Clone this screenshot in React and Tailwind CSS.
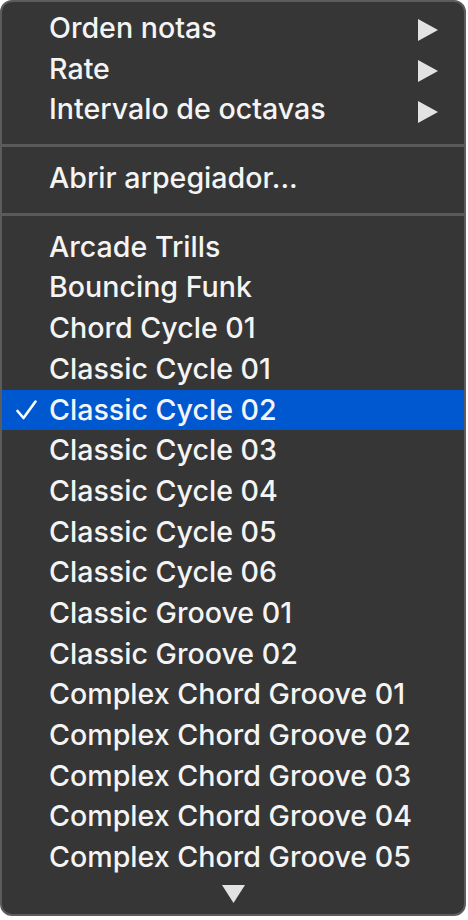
import React from "react";

const font = { fontFamily: 'Inter, "Liberation Sans", Arial, sans-serif' };

function RightTri() {
  return (
    <svg width="20" height="22" viewBox="0 0 20 22" className="block">
      <path d="M0 0 L20 11 L0 22 Z" fill="#e3e3e3" />
    </svg>
  );
}

function Row({ label, arrow, checked }) {
  return (
    <div
      className={`h-[40.7px] flex items-center relative ${checked ? "bg-[#0058d0]" : ""}`}
    >
      <div className="w-[47px] shrink-0 flex justify-center pl-[2px]">
        {checked && (
          <svg width="21" height="20" viewBox="0 0 21 20" className="block">
            <path
              d="M1.5 11 L7.5 18 L19.5 1.5"
              fill="none"
              stroke="#ffffff"
              strokeWidth="2.6"
              strokeLinecap="round"
              strokeLinejoin="round"
            />
          </svg>
        )}
      </div>
      <div className="flex-1 text-[28.6px] font-medium leading-none text-[#f4f4f4] whitespace-nowrap">
        {label}
      </div>
      {arrow && (
        <div className="pr-[26px] mt-[4px]">
          <RightTri />
        </div>
      )}
    </div>
  );
}

function Sep() {
  return (
    <div className="h-[28px] flex items-center">
      <div className="w-full h-[3px] bg-[#5a5a5a] mt-[3px]" />
    </div>
  );
}

export default function App() {
  const list = [
    "Arcade Trills",
    "Bouncing Funk",
    "Chord Cycle 01",
    "Classic Cycle 01",
    "Classic Cycle 02",
    "Classic Cycle 03",
    "Classic Cycle 04",
    "Classic Cycle 05",
    "Classic Cycle 06",
    "Classic Groove 01",
    "Classic Groove 02",
    "Complex Chord Groove 01",
    "Complex Chord Groove 02",
    "Complex Chord Groove 03",
    "Complex Chord Groove 04",
    "Complex Chord Groove 05",
  ];
  return (
    <div className="w-[468px] h-[920px] bg-white" style={font}>
      <div className="w-[466px] h-[916px] bg-[#363636] rounded-[12px] border-2 border-[#5c5c5c] pt-[6px] overflow-hidden flex flex-col">
        <Row label="Orden notas" arrow />
        <Row label="Rate" arrow />
        <Row label="Intervalo de octavas" arrow />
        <Sep />
        <Row label="Abrir arpegiador..." />
        <Sep />
        {list.map((l) => (
          <Row key={l} label={l} checked={l === "Classic Cycle 02"} />
        ))}
        <div className="flex justify-center mt-[7px]">
          <svg width="23" height="18" viewBox="0 0 23 18" className="block">
            <path d="M0 0 L23 0 L11.5 18 Z" fill="#e3e3e3" />
          </svg>
        </div>
      </div>
    </div>
  );
}
